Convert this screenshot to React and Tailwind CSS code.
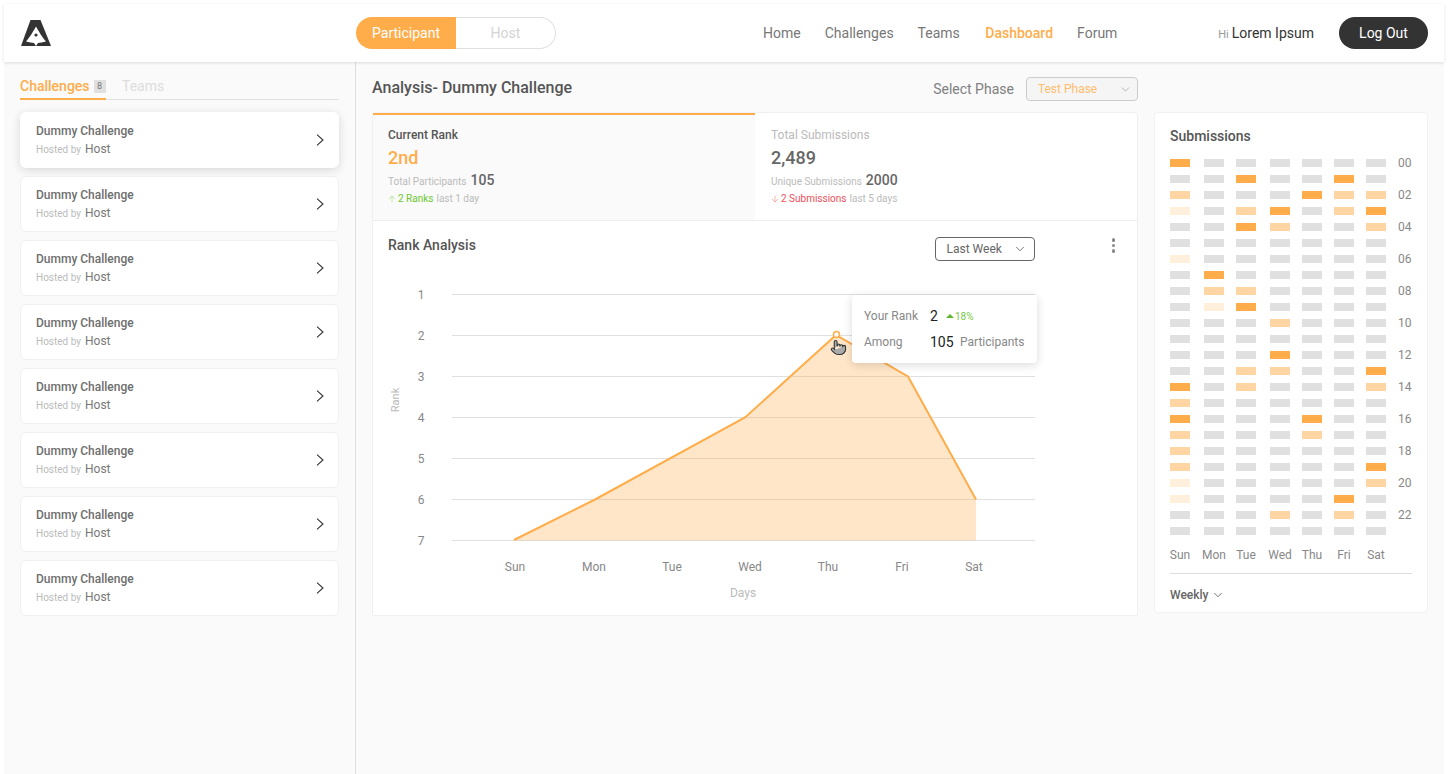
import React from "react";
import { ArrowDown, ArrowUp, ChevronDown, Pointer } from "lucide-react";

const navItems = ["Home", "Challenges", "Teams", "Dashboard", "Forum"];
const challenges = Array.from({ length: 8 }, (_, i) => i);
const days = ["Sun", "Mon", "Tue", "Wed", "Thu", "Fri", "Sat"];
const ranks = [1, 2, 3, 4, 5, 6, 7];

const chartDays = [
  { label: "Sun", x: 515 },
  { label: "Mon", x: 594 },
  { label: "Tue", x: 672 },
  { label: "Wed", x: 750 },
  { label: "Thu", x: 828 },
  { label: "Fri", x: 902 },
  { label: "Sat", x: 974 },
];

const heat = [
  [3, 0, 0, 0, 0, 0, 0],
  [0, 0, 3, 0, 0, 3, 0],
  [2, 0, 0, 0, 3, 2, 2],
  [1, 0, 2, 3, 0, 2, 3],
  [0, 0, 3, 2, 0, 0, 2],
  [0, 0, 0, 0, 0, 0, 0],
  [1, 0, 0, 0, 0, 0, 0],
  [0, 3, 0, 0, 0, 0, 0],
  [0, 2, 2, 0, 0, 0, 0],
  [0, 1, 3, 0, 0, 0, 0],
  [0, 0, 0, 2, 0, 0, 0],
  [0, 0, 0, 0, 0, 0, 0],
  [0, 0, 0, 3, 0, 0, 0],
  [0, 0, 2, 2, 0, 0, 3],
  [3, 0, 2, 0, 0, 0, 2],
  [2, 0, 0, 0, 0, 0, 0],
  [3, 0, 0, 0, 3, 0, 0],
  [2, 0, 0, 0, 2, 0, 0],
  [2, 0, 0, 0, 0, 0, 0],
  [2, 0, 0, 0, 0, 0, 3],
  [1, 0, 0, 0, 0, 0, 2],
  [1, 0, 0, 0, 0, 3, 0],
  [0, 0, 0, 2, 0, 2, 0],
  [0, 0, 0, 0, 0, 0, 0],
];

const heatColors = ["bg-[#e0e0e0]", "bg-[#ffefdb]", "bg-[#ffd6a3]", "bg-[#ffad4a]"];

const Logo = () => (
  <svg width="30" height="26" viewBox="0 0 30 26">
    <path d="M9.5 0H19.5L30 26H0Z" fill="#333333" />
    <path d="M15 6.5C17 10 21 17 25 21.5C22 22.5 19 22.7 17 23L15 26L13 23C11 22.7 8 22.5 5 21.5C9 17 13 10 15 6.5Z" fill="#ffffff" />
    <circle cx="15" cy="15" r="1.6" fill="#333333" />
  </svg>
);

const Header = () => (
  <header className="relative z-10 flex h-[58px] shrink-0 items-center bg-white pl-[17px] pr-4 shadow-[0_1px_3px_rgba(0,0,0,0.12)]">
    <Logo />
    <div className="ml-[305px] flex h-8 w-[200px] text-sm">
      <div className="flex w-[100px] items-center justify-center rounded-l-full bg-[#ffad4a] text-white">
        Participant
      </div>
      <div className="flex w-[100px] items-center justify-center rounded-r-full border border-l-0 border-[#e0e0e0] text-[#d4d4d4]">
        Host
      </div>
    </div>
    <nav className="ml-[207px] flex gap-6 text-sm">
      {navItems.map((item) => (
        <span
          key={item}
          className={item === "Dashboard" ? "ml-[1.5px] font-medium text-[#ffad4a]" : "text-[#777777]"}
        >
          {item}
        </span>
      ))}
    </nav>
    <div className="ml-auto flex items-baseline gap-[3px]">
      <span className="text-[11px] text-[#999999]">Hi</span>
      <span className="text-sm text-[#333333]">Lorem Ipsum</span>
    </div>
    <button className="ml-[25px] h-8 w-[89px] rounded-full bg-[#333333] text-sm text-white">
      Log Out
    </button>
  </header>
);

const ChallengeCard = ({ active }) => (
  <div
    className={
      "flex h-14 items-center justify-between rounded-md bg-white " +
      (active
        ? "pl-4 pr-[15px] shadow-[0_2px_10px_rgba(0,0,0,0.14)]"
        : "border border-[#f0f0f0] pl-[15px] pr-[14px]")
    }
  >
    <div>
      <div className="text-xs font-medium leading-[18px] text-[#6e6e6e]">Dummy Challenge</div>
      <div className="mt-px flex items-baseline gap-1 leading-[18px]">
        <span className="text-[10px] text-[#bbbbbb]">Hosted by</span>
        <span className="text-xs text-[#777777]">Host</span>
      </div>
    </div>
    <svg width="8" height="12" viewBox="0 0 8 12" fill="none" stroke="#333333" strokeWidth="1.1">
      <path d="M1 0.7L7 6L1 11.3" />
    </svg>
  </div>
);

const Sidebar = () => (
  <aside className="w-[352px] shrink-0 border-r border-[#dddddd] px-4">
    <div className="flex h-[38px] items-end border-b border-[#e0e0e0]">
      <div className="-mb-px flex h-[24px] w-[86px] items-start gap-1 border-b-2 border-[#ffad4a]">
        <span className="text-sm font-medium leading-[20px] text-[#ffad4a]">Challenges</span>
        <span className="mt-1 flex h-[13px] w-3 items-center justify-center bg-[#e0e0e0] text-[9px] text-[#777777]">
          8
        </span>
      </div>
      <span className="ml-4 h-[23px] text-sm leading-[20px] text-[#dddddd]">Teams</span>
    </div>
    <div className="mt-3 flex flex-col gap-2">
      {challenges.map((i) => (
        <ChallengeCard key={i} active={i === 0} />
      ))}
    </div>
  </aside>
);

const Stat = ({ active, title, value, subLabel, subValue, Arrow, change, period, changeColor, arrowColor }) => (
  <div
    className={
      "h-[107px] w-1/2 " +
      (active ? "border-t-2 border-[#ffad4a] bg-[#fafafa] pl-[15px] pt-3" : "pl-4 pt-[14px]")
    }
  >
    <div className={"text-xs leading-4 " + (active ? "font-medium text-[#555555]" : "text-[#bbbbbb]")}>
      {title}
    </div>
    <div
      className={
        "mt-[3px] text-lg font-medium leading-6 " + (active ? "text-[#ffad4a]" : "text-[#666666]")
      }
    >
      {value}
    </div>
    <div className="flex items-baseline gap-1 leading-[18px]">
      <span className="text-[10px] text-[#bbbbbb]">{subLabel}</span>
      <span className="text-sm font-medium text-[#666666]">{subValue}</span>
    </div>
    <div className="mt-px flex items-center gap-[3px] text-[10px] leading-[14px] text-[#bbbbbb]">
      <Arrow size={10} strokeWidth={1.25} className={"-ml-px mr-[-2px] " + arrowColor} />
      <span className={changeColor}>{change}</span>
      {period}
    </div>
  </div>
);

const RankChart = () => (
  <div className="relative h-[338px] w-full">
    <svg width="764" height="338" viewBox="373 277 764 338" className="block">
      {ranks.map((r, i) => (
        <g key={r}>
          <line x1="452" x2="1035" y1={294.5 + i * 41} y2={294.5 + i * 41} stroke="#e0e0e0" />
          <text x="421" y={299 + i * 41} textAnchor="middle" fontSize="12" fill="#888888">
            {r}
          </text>
        </g>
      ))}
      <path
        d="M514 540.5L595 499.5L745 417.5L836 335L908 376.5L976 499.5V540.5Z"
        fill="#ffad4a"
        fillOpacity="0.3"
      />
      <path
        d="M514 540L595 499.5L745 417.5L836 335L908 376.5L976 499.5"
        fill="none"
        stroke="#ffad4a"
        strokeWidth="2"
      />
      <circle cx="836.5" cy="334.5" r="3" fill="#ffffff" stroke="#ffad4a" strokeWidth="1.5" />
      <text
        x="0"
        y="0"
        transform="translate(399 400) rotate(-90)"
        textAnchor="middle"
        fontSize="11"
        fill="#bbbbbb"
      >
        Rank
      </text>
      {chartDays.map((d) => (
        <text key={d.label} x={d.x} y="571" textAnchor="middle" fontSize="12" fill="#888888">
          {d.label}
        </text>
      ))}
      <text x="743" y="597" textAnchor="middle" fontSize="12" fill="#bbbbbb">
        Days
      </text>
    </svg>
    <Pointer
      size={17}
      strokeWidth={1.5}
      className="absolute left-[457px] top-[62px] fill-[#aaaaaa] text-[#333333]"
    />
    <div className="absolute left-[479px] top-[18px] h-[68px] w-[185px] rounded bg-white pl-3 pt-[11px] shadow-[0_2px_10px_rgba(0,0,0,0.15)]">
      <div className="flex h-5 items-center">
        <span className="w-[66px] text-xs text-[#888888]">Your Rank</span>
        <span className="w-4 text-sm text-[#222222]">2</span>
        <span className="flex items-center gap-px text-[10px] text-[#7ac943]">
          <span className="h-0 w-0 border-x-[4px] border-b-[4px] border-x-transparent border-b-[#5fb82e]" />
          18%
        </span>
      </div>
      <div className="mt-1.5 flex h-5 items-center">
        <span className="w-[66px] text-xs text-[#888888]">Among</span>
        <span className="w-[30px] text-sm text-[#222222]">105</span>
        <span className="text-xs text-[#888888]">Participants</span>
      </div>
    </div>
  </div>
);

const AnalysisCard = () => (
  <section className="h-[504px] w-[766px] shrink-0 rounded-t border border-[#f0f0f0] bg-white">
    <div className="flex border-b border-[#eeeeee]">
      <Stat
        active
        title="Current Rank"
        value="2nd"
        subLabel="Total Participants"
        subValue="105"
        Arrow={ArrowUp}
        change="2 Ranks"
        period="last 1 day"
        changeColor="text-[#6cc62f]"
        arrowColor="text-[#8fd45f]"
      />
      <Stat
        title="Total Submissions"
        value="2,489"
        subLabel="Unique Submissions"
        subValue="2000"
        Arrow={ArrowDown}
        change="2 Submissions"
        period="last 5 days"
        changeColor="text-[#f0505a]"
        arrowColor="text-[#f0707a]"
      />
    </div>
    <div className="flex h-[56px] items-start pl-[15px] pr-[22px] pt-4">
      <h2 className="text-sm font-medium leading-4 text-[#555555]">Rank Analysis</h2>
      <button className="ml-auto flex h-6 w-[100px] items-center gap-[11px] rounded border border-[#666666] pl-[11px] text-xs text-[#666666]">
        Last Week
        <ChevronDown size={14} strokeWidth={1.5} />
      </button>
      <div className="ml-[77px] mt-px flex flex-col gap-[2px]">
        <span className="h-[3.5px] w-[3.5px] rounded-full bg-[#888888]" />
        <span className="h-[3.5px] w-[3.5px] rounded-full bg-[#888888]" />
        <span className="h-[3.5px] w-[3.5px] rounded-full bg-[#888888]" />
      </div>
    </div>
    <RankChart />
  </section>
);

const SubmissionsCard = () => (
  <section className="h-[501px] w-[274px] shrink-0 rounded border border-[#f2f2f2] bg-white px-[15px] pt-[15px]">
    <h2 className="text-sm font-medium leading-4 text-[#555555]">Submissions</h2>
    <div className="mt-[15px] grid grid-cols-[34px_32px_34px_32px_32px_32px_32px_1fr] gap-y-2">
      {heat.map((row, r) => (
        <React.Fragment key={r}>
          {row.map((v, c) => (
            <div key={c} className={"h-2 w-5 " + heatColors[v]} />
          ))}
          <div className="h-2 text-xs leading-2 text-[#888888]">
            {r % 2 === 0 ? String(r).padStart(2, "0") : ""}
          </div>
        </React.Fragment>
      ))}
    </div>
    <div className="mt-[13px] grid grid-cols-[34px_32px_34px_32px_32px_32px_32px_1fr]">
      {days.map((d) => (
        <div key={d} className="flex w-5 justify-center text-xs leading-[14px] text-[#888888]">
          {d}
        </div>
      ))}
    </div>
    <div className="mt-[11px] flex items-center gap-[3px] border-t border-[#dddddd] pt-[13px] text-xs font-medium leading-4 text-[#666666]">
      Weekly
      <ChevronDown size={14} strokeWidth={1.5} />
    </div>
  </section>
);

const App = () => {
  return (
    <div className="flex h-screen flex-col overflow-hidden bg-white px-1 pt-1 font-['Roboto',sans-serif]">
      <Header />
      <div className="flex min-h-0 flex-1 bg-[#fafafa]">
        <Sidebar />
        <main className="flex-1 px-4">
          <div className="flex h-[50px] items-center">
            <h1 className="mt-px text-base font-medium text-[#555555]">Analysis- Dummy Challenge</h1>
            <div className="ml-[361px] mt-1 flex items-center gap-3">
              <span className="text-sm text-[#808080]">Select Phase</span>
              <div className="flex h-6 w-28 items-center justify-between rounded border border-[#cccccc] bg-[#f5f5f5] pl-[11px] pr-[5px] text-xs text-[#ffbd6e]">
                Test Phase
                <ChevronDown size={13} strokeWidth={1.25} className="text-[#999999]" />
              </div>
            </div>
          </div>
          <div className="flex items-start gap-4">
            <AnalysisCard />
            <SubmissionsCard />
          </div>
        </main>
      </div>
    </div>
  );
};

export default App;
